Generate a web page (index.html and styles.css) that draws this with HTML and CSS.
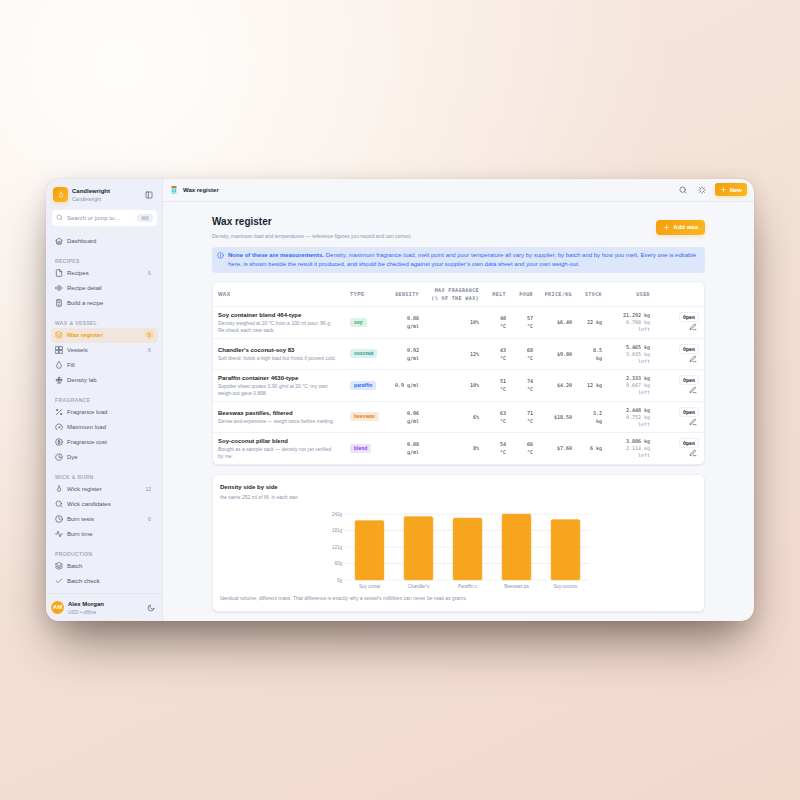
FILE: index.html
```html
<!DOCTYPE html>
<html lang="en">
<head>
    <title>Candlewright - Wax register</title>
    <meta charset="UTF-8">
    <meta name="viewport" content="width=device-width, initial-scale=1">
    <link rel="stylesheet" href="styles.css">
</head>
<body>

<!-- icon set, 24px grid -->
<svg class="sprite" aria-hidden="true">
    <symbol id="i-flame" viewBox="0 0 24 24"><path d="M12 3c1 4 5 6 5 11a5 5 0 0 1-10 0c0-2 1-3 2-4 1 1 2 1 2-1 0-2 0-4 1-6z"/></symbol>
    <symbol id="i-panel" viewBox="0 0 24 24"><rect x="3" y="3" width="18" height="18" rx="2"/><path d="M10 3v18"/></symbol>
    <symbol id="i-search" viewBox="0 0 24 24"><circle cx="11" cy="11" r="8"/><path d="m21 21-4-4"/></symbol>
    <symbol id="i-home" viewBox="0 0 24 24"><path d="m2 11 10-8 10 8M5 9v12h14V9M9 21v-7h6v7"/></symbol>
    <symbol id="i-file" viewBox="0 0 24 24"><path d="M14 2H6a2 2 0 0 0-2 2v16a2 2 0 0 0 2 2h12a2 2 0 0 0 2-2V8zM14 2v6h6"/></symbol>
    <symbol id="i-eye" viewBox="0 0 24 24"><path d="M2 12s4-7 10-7 10 7 10 7-4 7-10 7-10-7-10-7z"/><circle cx="12" cy="12" r="3"/></symbol>
    <symbol id="i-calc" viewBox="0 0 24 24"><rect x="5" y="2" width="14" height="20" rx="2"/><path d="M9 6h6M9 11h6M9 18h6"/></symbol>
    <symbol id="i-layers" viewBox="0 0 24 24"><path d="m12 2 10 5-10 5L2 7zM2 12l10 5 10-5M2 17l10 5 10-5"/></symbol>
    <symbol id="i-grid" viewBox="0 0 24 24"><path d="M2 2h9v9H2zM13 2h9v9h-9zM13 13h9v9h-9zM2 13h9v9H2z"/></symbol>
    <symbol id="i-drop" viewBox="0 0 24 24"><path d="M12 2s7 7 7 13a7 7 0 0 1-14 0c0-6 7-13 7-13z"/></symbol>
    <symbol id="i-scale" viewBox="0 0 24 24"><circle cx="12" cy="5" r="2"/><path d="M12 7v14M3 10h18M7 21h10M7 10l-3 5h6zM17 10l-3 5h6z"/></symbol>
    <symbol id="i-percent" viewBox="0 0 24 24"><path d="M20 4 4 20"/><circle cx="6" cy="6" r="2"/><circle cx="18" cy="18" r="2"/></symbol>
    <symbol id="i-gauge" viewBox="0 0 24 24"><path d="M5 20a10 10 0 1 1 14 0M12 14l4-4"/><circle cx="12" cy="14" r="1"/></symbol>
    <symbol id="i-dollar" viewBox="0 0 24 24"><circle cx="12" cy="12" r="10"/><path d="M15 9c-1-2-6-2-6 0 0 3 6 2 6 5 0 3-5 3-6 1M12 6v12"/></symbol>
    <symbol id="i-pie" viewBox="0 0 24 24"><path d="M21 16A10 10 0 1 1 8 3M22 12A10 10 0 0 0 12 2v10z"/></symbol>
    <symbol id="i-clock" viewBox="0 0 24 24"><circle cx="12" cy="12" r="10"/><path d="M12 6v6l4 2"/></symbol>
    <symbol id="i-pulse" viewBox="0 0 24 24"><path d="M22 12h-4l-3 9L9 3l-3 9H2"/></symbol>
    <symbol id="i-check" viewBox="0 0 24 24"><path d="M20 6 9 17l-5-5"/></symbol>
    <symbol id="i-moon" viewBox="0 0 24 24"><path d="M21 13A9 9 0 1 1 11 3a7 7 0 0 0 10 10z"/></symbol>
    <symbol id="i-sun" viewBox="0 0 24 24"><path d="M12 2v4M12 18v4M2 12h4M18 12h4M5 5l3 3M16 16l3 3M5 19l3-3M16 8l3-3"/></symbol>
    <symbol id="i-plus" viewBox="0 0 24 24"><path d="M12 4v16M4 12h16"/></symbol>
    <symbol id="i-info" viewBox="0 0 24 24"><circle cx="12" cy="12" r="10"/><path d="M12 11v6M12 7v1"/></symbol>
    <symbol id="i-edit" viewBox="0 0 24 24"><path d="M13 20h8M16 4a2 2 0 0 1 3 3L7 19l-4 1 1-4z"/></symbol>
</svg>

<div class="window">

    <aside class="sidebar">
        <div class="brand">
            <span class="logo"><svg class="icon"><use href="#i-flame"/></svg></span>
            <div class="who">
                <strong>Candlewright</strong>
                <small>Candlewright</small>
            </div>
            <button class="icon-btn" aria-label="Collapse sidebar"><svg class="icon"><use href="#i-panel"/></svg></button>
        </div>

        <label class="search">
            <svg class="icon"><use href="#i-search"/></svg>
            <input type="text" placeholder="Search or jump to…" aria-label="Search">
            <kbd>⌘K</kbd>
        </label>

        <nav>
            <a href="#"><svg class="icon"><use href="#i-home"/></svg>Dashboard</a>
            <h3>Recipes</h3>
            <a href="#"><svg class="icon"><use href="#i-file"/></svg>Recipes <span class="count">6</span></a>
            <a href="#"><svg class="icon"><use href="#i-eye"/></svg>Recipe detail</a>
            <a href="#"><svg class="icon"><use href="#i-calc"/></svg>Build a recipe</a>
            <h3>Wax &amp; vessel</h3>
            <a href="#" class="active"><svg class="icon"><use href="#i-layers"/></svg>Wax register <span class="count">5</span></a>
            <a href="#"><svg class="icon"><use href="#i-grid"/></svg>Vessels <span class="count">6</span></a>
            <a href="#"><svg class="icon"><use href="#i-drop"/></svg>Fill</a>
            <a href="#"><svg class="icon"><use href="#i-scale"/></svg>Density lab</a>
            <h3>Fragrance</h3>
            <a href="#"><svg class="icon"><use href="#i-percent"/></svg>Fragrance load</a>
            <a href="#"><svg class="icon"><use href="#i-gauge"/></svg>Maximum load</a>
            <a href="#"><svg class="icon"><use href="#i-dollar"/></svg>Fragrance cost</a>
            <a href="#"><svg class="icon"><use href="#i-pie"/></svg>Dye</a>
            <h3>Wick &amp; burn</h3>
            <a href="#"><svg class="icon"><use href="#i-flame"/></svg>Wick register <span class="count">12</span></a>
            <a href="#"><svg class="icon"><use href="#i-search"/></svg>Wick candidates</a>
            <a href="#"><svg class="icon"><use href="#i-clock"/></svg>Burn tests <span class="count">6</span></a>
            <a href="#"><svg class="icon"><use href="#i-pulse"/></svg>Burn time</a>
            <h3>Production</h3>
            <a href="#"><svg class="icon"><use href="#i-layers"/></svg>Batch</a>
            <a href="#"><svg class="icon"><use href="#i-check"/></svg>Batch check</a>
        </nav>

        <div class="user">
            <span class="avatar">AM</span>
            <div class="who">
                <strong>Alex Morgan</strong>
                <small>USD • offline</small>
            </div>
            <button class="icon-btn" aria-label="Dark mode"><svg class="icon"><use href="#i-moon"/></svg></button>
        </div>
    </aside>

    <div class="main">
        <header class="topbar">
            <svg class="jar" viewBox="0 0 12 16" aria-hidden="true">
                <rect x="1" y="3" width="10" height="13" rx="2" fill="#9be3ee"/>
                <rect x="2" y="7" width="8" height="5" fill="#4fc3d9"/>
                <rect x="4" y="8" width="4" height="3" fill="#a6e6f0"/>
                <rect x="1" y="0" width="10" height="4" rx="1" fill="#b58a2e"/>
            </svg>
            <strong>Wax register</strong>
            <button class="icon-btn" aria-label="Search"><svg class="icon"><use href="#i-search"/></svg></button>
            <button class="icon-btn" aria-label="Theme"><svg class="icon"><use href="#i-sun"/></svg></button>
            <button class="btn"><svg class="icon"><use href="#i-plus"/></svg>New</button>
        </header>

        <main class="content">
            <div class="page-head">
                <div>
                    <h1>Wax register</h1>
                    <p>Density, maximum load and temperatures — reference figures you record and can correct</p>
                </div>
                <button class="btn large"><svg class="icon"><use href="#i-plus"/></svg>Add wax</button>
            </div>

            <div class="notice">
                <svg class="icon"><use href="#i-info"/></svg>
                <p><b>None of these are measurements.</b> Density, maximum fragrance load, melt point and pour temperature all vary by supplier, by batch and by how you melt. Every one is editable here, is shown beside the result it produced, and should be checked against your supplier’s own data sheet and your own weigh-out.</p>
            </div>

            <div class="card">
                <table>
                    <colgroup>
                        <col><col class="c-type"><col class="c-density"><col class="c-max"><col class="c-temp"><col class="c-temp"><col class="c-price"><col class="c-stock"><col class="c-used"><col class="c-used">
                    </colgroup>
                    <thead>
                        <tr>
                            <th>Wax</th>
                            <th>Type</th>
                            <th class="num">Density</th>
                            <th class="num">Max fragrance<br>(% of the wax)</th>
                            <th class="num">Melt</th>
                            <th class="num">Pour</th>
                            <th class="num">Price/kg</th>
                            <th class="num">Stock</th>
                            <th class="num">Used</th>
                            <th></th>
                        </tr>
                    </thead>
                    <tbody>
                        <tr>
                            <td><strong>Soy container blend 464-type</strong><p>Density weighed at 20 °C from a 100 ml pour: 86 g.<br>Re-check each new sack.</p></td>
                            <td><span class="tag soy">soy</span></td>
                            <td class="num">0.86<br>g/ml</td>
                            <td class="num">10%</td>
                            <td class="num">48<br>°C</td>
                            <td class="num">57<br>°C</td>
                            <td class="num">$6.40</td>
                            <td class="num">22 kg</td>
                            <td class="num">21.292 kg<small>0.708 kg<br>left</small></td>
                            <td class="num"><div class="actions"><button class="open">Open</button><button class="icon-btn" aria-label="Edit"><svg class="icon"><use href="#i-edit"/></svg></button></div></td>
                        </tr>
                        <tr>
                            <td><strong>Chandler's coconut-soy 83</strong><p>Soft blend, holds a high load but frosts if poured cold.</p></td>
                            <td><span class="tag coconut">coconut</span></td>
                            <td class="num">0.92<br>g/ml</td>
                            <td class="num">12%</td>
                            <td class="num">43<br>°C</td>
                            <td class="num">68<br>°C</td>
                            <td class="num">$9.80</td>
                            <td class="num">8.5<br>kg</td>
                            <td class="num">5.465 kg<small>3.035 kg<br>left</small></td>
                            <td class="num"><div class="actions"><button class="open">Open</button><button class="icon-btn" aria-label="Edit"><svg class="icon"><use href="#i-edit"/></svg></button></div></td>
                        </tr>
                        <tr>
                            <td><strong>Paraffin container 4630-type</strong><p>Supplier sheet quotes 0.90 g/ml at 20 °C; my own<br>weigh-out gave 0.898.</p></td>
                            <td><span class="tag paraffin">paraffin</span></td>
                            <td class="num">0.9 g/ml</td>
                            <td class="num">10%</td>
                            <td class="num">51<br>°C</td>
                            <td class="num">74<br>°C</td>
                            <td class="num">$4.20</td>
                            <td class="num">12 kg</td>
                            <td class="num">2.333 kg<small>9.667 kg<br>left</small></td>
                            <td class="num"><div class="actions"><button class="open">Open</button><button class="icon-btn" aria-label="Edit"><svg class="icon"><use href="#i-edit"/></svg></button></div></td>
                        </tr>
                        <tr>
                            <td><strong>Beeswax pastilles, filtered</strong><p>Dense and expensive — weigh twice before melting.</p></td>
                            <td><span class="tag beeswax">beeswax</span></td>
                            <td class="num">0.96<br>g/ml</td>
                            <td class="num">6%</td>
                            <td class="num">63<br>°C</td>
                            <td class="num">71<br>°C</td>
                            <td class="num">$18.50</td>
                            <td class="num">3.2<br>kg</td>
                            <td class="num">2.448 kg<small>0.752 kg<br>left</small></td>
                            <td class="num"><div class="actions"><button class="open">Open</button><button class="icon-btn" aria-label="Edit"><svg class="icon"><use href="#i-edit"/></svg></button></div></td>
                        </tr>
                        <tr>
                            <td><strong>Soy-coconut pillar blend</strong><p>Bought as a sample sack — density not yet verified<br>by me.</p></td>
                            <td><span class="tag blend">blend</span></td>
                            <td class="num">0.88<br>g/ml</td>
                            <td class="num">8%</td>
                            <td class="num">54<br>°C</td>
                            <td class="num">66<br>°C</td>
                            <td class="num">$7.60</td>
                            <td class="num">6 kg</td>
                            <td class="num">3.886 kg<small>2.114 kg<br>left</small></td>
                            <td class="num"><div class="actions"><button class="open">Open</button><button class="icon-btn" aria-label="Edit"><svg class="icon"><use href="#i-edit"/></svg></button></div></td>
                        </tr>
                    </tbody>
                </table>
            </div>

            <section class="card chart-card">
                <h2>Density side by side</h2>
                <p>the same 252 ml of fill, in each wax</p>
                <svg class="chart" viewBox="0 0 528 168" role="img" aria-label="Mass of 252 ml of each wax">
                    <g class="lines">
                        <path d="M36 14h490M36 47h490M36 80h490M36 113h490M36 146h490"/>
                    </g>
                    <g class="bars">
                        <rect x="56" y="27" width="58" height="119" rx="3"/>
                        <rect x="154" y="19" width="58" height="127" rx="3"/>
                        <rect x="252" y="22" width="58" height="124" rx="3"/>
                        <rect x="350" y="14" width="58" height="132" rx="3"/>
                        <rect x="448" y="25" width="58" height="121" rx="3"/>
                    </g>
                    <g class="y">
                        <text x="30" y="17">242g</text>
                        <text x="30" y="50">181g</text>
                        <text x="30" y="83">121g</text>
                        <text x="30" y="116">60g</text>
                        <text x="30" y="149">0g</text>
                    </g>
                    <g class="x">
                        <text x="85" y="162">Soy contai</text>
                        <text x="183" y="162">Chandler's</text>
                        <text x="281" y="162">Paraffin c</text>
                        <text x="379" y="162">Beeswax pa</text>
                        <text x="477" y="162">Soy-coconu</text>
                    </g>
                </svg>
                <p>Identical volume, different mass. That difference is exactly why a vessel's millilitres can never be read as grams.</p>
            </section>
        </main>
    </div>

</div>

</body>
</html>
```
FILE: styles.css
```css
*, *:before, *:after {
    box-sizing: border-box;
}

body {
    margin: 0;
    min-height: 100vh;
    display: flex;
    align-items: center;
    justify-content: center;
    font-family: "Liberation Sans", Arial, sans-serif;
    font-size: 6px;
    line-height: 8px;
    color: #1a1f2e;
    background: radial-gradient(circle at 15% 8%, #fffefc 0%, rgba(255, 252, 249, 0.6) 25%, rgba(255, 250, 246, 0) 55%),
        linear-gradient(155deg, #f7e9e1 0%, #f3dfd3 60%, #f3d8cc 100%);
}

h1, h2, h3, p {
    margin: 0;
}

button, input {
    font: inherit;
    color: inherit;
    border: 0;
    padding: 0;
    background: none;
}

button {
    cursor: pointer;
}

small {
    display: block;
    font-size: 5px;
    line-height: 7px;
    color: #8b93ad;
}

.sprite {
    position: absolute;
    width: 0;
    height: 0;
}

.icon {
    display: block;
    flex: none;
    width: 8px;
    height: 8px;
    fill: none;
    stroke: currentColor;
    stroke-width: 2;
    stroke-linecap: round;
    stroke-linejoin: round;
}

.icon-btn {
    display: flex;
    align-items: center;
    justify-content: center;
    width: 13px;
    height: 13px;
    color: #4d5570;
}

.window {
    display: flex;
    width: 88.5%;
    aspect-ratio: 8 / 5;
    border-radius: 13px;
    overflow: hidden;
    background: #f6f7fb;
    box-shadow: 0 0 1px rgba(60, 30, 20, 0.3), 0 28px 50px -10px rgba(50, 35, 28, 0.56), 0 6px 20px rgba(60, 35, 25, 0.12);
}

/* sidebar */

.sidebar {
    flex: none;
    width: 117px;
    display: flex;
    flex-direction: column;
    background: #edf0f8;
    border-right: 1px solid #e6e9f2;
}

.brand {
    display: flex;
    align-items: center;
    gap: 4px;
    padding: 8px 7px 7px;
}

.logo {
    display: flex;
    align-items: center;
    justify-content: center;
    width: 15px;
    height: 15px;
    border-radius: 4px;
    color: #fff;
    background: linear-gradient(135deg, #f59e0b, #fbb724);
    box-shadow: 0 2px 4px rgba(245, 158, 11, 0.25);
}

.who {
    flex: 1;
}

.who strong {
    display: block;
}

.who small {
    margin-top: 1px;
}

.search {
    display: flex;
    align-items: center;
    gap: 4px;
    height: 16px;
    margin: 0 5px 8px 6px;
    padding: 0 4px;
    border-radius: 4px;
    background: #fff;
    color: #8b93ad;
}

.search .icon {
    width: 7px;
    height: 7px;
}

.search input {
    flex: 1;
    min-width: 0;
    outline: none;
}

.search input::placeholder {
    color: #8b93ad;
    opacity: 1;
}

kbd {
    padding: 0 4px;
    border-radius: 3px;
    font-family: inherit;
    font-size: 5px;
    background: #edf0f6;
}

nav {
    flex: 1;
    min-height: 0;
    overflow: hidden;
    padding: 0 4px 0 5px;
}

nav a {
    display: flex;
    align-items: center;
    gap: 4px;
    height: 15px;
    padding: 0 4px;
    border-radius: 4px;
    color: #4d5570;
    text-decoration: none;
}

nav a.active {
    color: #f59e0b;
    font-weight: bold;
    background: #f0e6dd;
}

nav h3 {
    padding: 8px 4px 1px;
    font-size: 5px;
    line-height: 8px;
    letter-spacing: 0.08em;
    text-transform: uppercase;
    color: #a3aac0;
}

.count {
    min-width: 9px;
    margin-left: auto;
    padding: 0 3px;
    border-radius: 4px;
    font-size: 5px;
    text-align: center;
    color: #8b93ad;
}

.active .count {
    color: #f59e0b;
    background: #f3d9b4;
}

.user {
    display: flex;
    align-items: center;
    gap: 4px;
    height: 28px;
    padding: 0 5px;
    border-top: 1px solid #e3e6ef;
}

.avatar {
    width: 13px;
    height: 13px;
    border-radius: 50%;
    line-height: 13px;
    text-align: center;
    font-size: 6px;
    font-weight: bold;
    color: #fff;
    background: #f8a817;
}

/* main column */

.main {
    flex: 1;
    min-width: 0;
}

.topbar {
    display: flex;
    align-items: center;
    gap: 6px;
    height: 23px;
    padding: 0 7px 0 8px;
    border-bottom: 1px solid #e6e9f2;
}

.topbar strong {
    flex: 1;
}

.jar {
    width: 6px;
    height: 8px;
}

.btn {
    display: flex;
    align-items: center;
    gap: 3px;
    height: 13px;
    padding: 0 5px;
    border-radius: 3px;
    font-weight: bold;
    color: #fff;
    background: linear-gradient(135deg, #f59e0b, #fbb724);
    box-shadow: 0 2px 4px rgba(245, 158, 11, 0.2);
}

.btn .icon {
    width: 7px;
    height: 7px;
}

.btn.large {
    height: 15px;
    padding: 0 7px;
    border-radius: 4px;
}

.content {
    max-width: 493px;
    margin: 0 auto;
    padding: 13px 0 9px;
}

.page-head {
    display: flex;
    align-items: center;
    justify-content: space-between;
    margin-bottom: 7px;
}

h1 {
    font-size: 10px;
    line-height: 14px;
    margin-bottom: 3px;
}

.page-head p {
    font-size: 5px;
    color: #8b93ad;
}

.notice {
    display: flex;
    gap: 4px;
    margin-bottom: 8px;
    padding: 4px 5px;
    border-radius: 4px;
    line-height: 9px;
    color: #2f6bf2;
    background: #dde6fa;
}

.notice .icon {
    width: 7px;
    height: 7px;
    margin-top: 1px;
}

.card {
    border: 1px solid #ebedf5;
    border-radius: 6px;
    overflow: hidden;
    background: #fff;
    box-shadow: 0 1px 1px rgba(30, 40, 80, 0.08);
}

/* register table */

table {
    width: 100%;
    table-layout: fixed;
    border-collapse: collapse;
}

.c-type { width: 41px; }
.c-density { width: 39px; }
.c-max { width: 60px; }
.c-temp { width: 27px; }
.c-price { width: 39px; }
.c-stock { width: 30px; }
.c-used { width: 48px; }

th, td {
    padding: 4px 5px;
    text-align: left;
    vertical-align: middle;
    white-space: nowrap;
}

th:nth-child(n+3), td:nth-child(n+3):not(:last-child) {
    padding-right: 6px;
}

tbody td {
    border-top: 1px solid #eef0f6;
}

th {
    font-size: 5px;
    font-weight: bold;
    letter-spacing: 0.08em;
    text-transform: uppercase;
    color: #7d86a0;
}

.num {
    text-align: right;
    font-family: "DejaVu Sans Mono", monospace;
    font-size: 5px;
}

td strong {
    display: block;
    margin-bottom: 1px;
}

td p {
    font-size: 5px;
    line-height: 7px;
    color: #8b93ad;
}

.tag {
    display: inline-block;
    padding: 0 4px;
    border-radius: 2px;
    font-size: 5px;
    font-weight: bold;
    line-height: 9px;
}

.soy { color: #2fa862; background: #dcf3e4; }
.coconut { color: #17998c; background: #dbf1ee; }
.paraffin { color: #2f6bf2; background: #dde8fd; }
.beeswax { color: #e0801c; background: #fce9d6; }
.blend { color: #8a3ff0; background: #ebe2fd; }

.actions {
    display: flex;
    flex-direction: column;
    align-items: flex-end;
}

.open {
    height: 10px;
    padding: 0 3px;
    border: 1px solid #eef0f6;
    border-radius: 3px;
    font-weight: bold;
}

.actions .icon-btn {
    height: 10px;
}

/* chart */

.chart-card {
    margin-top: 9px;
    padding: 8px 7px;
}

h2 {
    font-size: 6px;
    line-height: 9px;
    margin-bottom: 1px;
}

.chart-card p {
    font-size: 5px;
    line-height: 9px;
    color: #8b93ad;
}

.chart {
    display: block;
    width: 100%;
    max-width: 264px;
    margin: 5px auto 3px;
}

.lines path {
    stroke: #eef0f6;
    stroke-width: 2;
}

.bars rect {
    fill: #f7a51e;
    stroke: #f9b23a;
}

.chart text {
    font-size: 9px;
    fill: #8b93ad;
}

.chart .y {
    text-anchor: end;
}

.chart .x {
    text-anchor: middle;
}
```
